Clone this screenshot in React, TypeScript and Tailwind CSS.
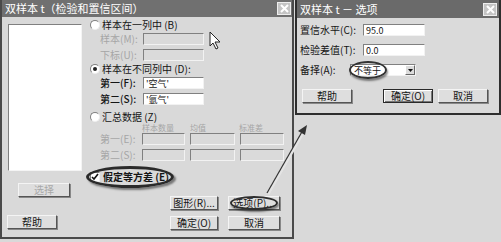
import React from 'react';

type BtnProps = {
  label: string;
  w: string;
  disabled?: boolean;
  isDefault?: boolean;
  circled?: boolean;
  className?: string;
};

function Btn({ label, w, disabled, isDefault, circled, className = '' }: BtnProps) {
  return (
    <div
      className={`relative h-[14px] ${w} flex items-center justify-center bg-[#dedede] text-[10px] leading-none border ${
        isDefault
          ? 'border-[#2a2a2a] shadow-[inset_1px_1px_0_#fff,inset_-1px_-1px_0_#777]'
          : 'border-t-[#f4f4f4] border-l-[#f4f4f4] border-b-[#555] border-r-[#555] shadow-[1px_1px_0_#888]'
      } ${disabled ? 'text-[#a8a8a8]' : 'text-[#151515]'} ${className}`}
    >
      {label}
      {circled && (
        <div className="absolute left-[1px] right-[1px] -top-[1px] -bottom-[1px] rounded-[50%] border-2 border-[#2e2e2e] shadow-[1px_2px_2px_rgba(0,0,0,0.45)]" />
      )}
    </div>
  );
}

function Field({ w, value, disabled }: { w: string; value?: string; disabled?: boolean }) {
  return (
    <div
      className={`h-[12px] ${w} border border-t-[#808080] border-l-[#808080] border-b-[#f2f2f2] border-r-[#f2f2f2] flex items-center px-[2px] text-[9px] leading-none text-[#151515] ${
        disabled ? 'bg-[#dadada]' : 'bg-white'
      }`}
    >
      {value}
    </div>
  );
}

function Radio({ checked }: { checked?: boolean }) {
  return (
    <div className="w-[10px] h-[10px] rounded-full bg-white border border-t-[#808080] border-l-[#808080] border-b-[#eee] border-r-[#eee] flex items-center justify-center mr-[2px]">
      {checked && <div className="w-[4px] h-[4px] rounded-full bg-[#222]" />}
    </div>
  );
}

function CloseBox() {
  return (
    <div className="w-[14px] h-[13px] bg-[#c4c4c4] border border-[#eee] flex items-center justify-center">
      <svg width="9" height="9" viewBox="0 0 9 9">
        <path d="M1 1 L8 8 M8 1 L1 8" stroke="#fff" strokeWidth="2" />
      </svg>
    </div>
  );
}

export default function App() {
  return (
    <div className="relative w-[501px] h-[242px] overflow-hidden bg-[#d9d9d9] flex font-['Noto_Sans_CJK_SC','Noto_Sans',sans-serif] text-[#151515]">
      {/* main dialog */}
      <div className="w-[294px] h-[239px] border-x-2 border-b-2 border-[#4a4a4a] bg-[#d9d9d9] flex flex-col">
        <div className="h-[17px] bg-[#707070] flex items-center justify-between pl-[3px] pr-[1px]">
          <span className="text-white text-[11px] leading-none">双样本 t（检验和置信区间）</span>
          <CloseBox />
        </div>

        <div className="flex flex-1">
          {/* left column */}
          <div className="w-[88px] flex flex-col">
            <div className="ml-[6px] mt-[7px] w-[74px] h-[147px] bg-white border border-t-[#808080] border-l-[#808080] border-b-[#f4f4f4] border-r-[#f4f4f4]" />
            <Btn label="选择" w="w-[52px]" disabled className="ml-[16px] mt-[12px]" />
            <Btn label="帮助" w="w-[50px]" className="ml-[5px] mt-[18px]" />
          </div>

          {/* right column */}
          <div className="flex-1 flex flex-col text-[10px] leading-none">
            <div className="mt-[2px] h-[12px] flex items-center">
              <Radio />
              <span>样本在一列中 (B)</span>
            </div>
            <div className="mt-[2px] h-[12px] flex items-center">
              <span className="w-[53px] pl-[10px] text-[#a6a6a6]">样本(M):</span>
              <Field w="w-[61px]" disabled />
            </div>
            <div className="mt-[4px] h-[12px] flex items-center">
              <span className="w-[53px] pl-[10px] text-[#a6a6a6]">下标(U):</span>
              <Field w="w-[61px]" disabled />
            </div>
            <div className="mt-[2px] h-[12px] flex items-center">
              <Radio checked />
              <span>样本在不同列中 (D):</span>
            </div>
            <div className="mt-[2px] h-[12px] flex items-center">
              <span className="w-[53px] pl-[10px] font-medium">第一(F):</span>
              <Field w="w-[61px]" value="'空气'" />
            </div>
            <div className="mt-[4px] h-[12px] flex items-center">
              <span className="w-[53px] pl-[10px] font-medium">第二(S):</span>
              <Field w="w-[61px]" value="'氩气'" />
            </div>
            <div className="mt-[6px] h-[12px] flex items-center">
              <Radio />
              <span>汇总数据 (Z)</span>
            </div>
            <div className="h-[9px] flex items-end text-[8px] text-[#a6a6a6]">
              <span className="w-[52px]" />
              <span className="w-[48px]">样本数量</span>
              <span className="w-[49px]">均值</span>
              <span>标准差</span>
            </div>
            <div className="mt-[1px] h-[12px] flex items-center gap-[5px]">
              <span className="w-[47px] pl-[10px] text-[#a6a6a6]">第一(E):</span>
              <Field w="w-[43px]" disabled />
              <Field w="w-[45px]" disabled />
              <Field w="w-[44px]" disabled />
            </div>
            <div className="mt-[4px] h-[12px] flex items-center gap-[5px]">
              <span className="w-[47px] pl-[10px] text-[#a6a6a6]">第二(S):</span>
              <Field w="w-[43px]" disabled />
              <Field w="w-[45px]" disabled />
              <Field w="w-[44px]" disabled />
            </div>
            <div className="mt-[10px] h-[12px] flex">
              <div className="relative flex items-center pr-[3px]">
                <div className="w-[10px] h-[10px] bg-white border border-t-[#808080] border-l-[#808080] border-b-[#eee] border-r-[#eee] flex items-center justify-center mr-[3px]">
                  <svg width="8" height="8" viewBox="0 0 8 8">
                    <path d="M1 4 L3 6 L7 1" stroke="#111" strokeWidth="1.6" fill="none" />
                  </svg>
                </div>
                <span className="font-semibold">假定等方差 (E)</span>
                <div className="absolute -left-[4px] -right-[2px] -top-[5px] -bottom-[5px] rounded-[50%] border-[3px] border-[#2a2a2a] shadow-[2px_2px_2px_rgba(0,0,0,0.45)]" />
              </div>
            </div>
            <div className="mt-[13px] flex gap-[10px] ml-[80px]">
              <Btn label="图形(R)..." w="w-[48px]" />
              <Btn label="选项(P)..." w="w-[52px]" circled />
            </div>
            <div className="mt-[6px] flex gap-[10px] ml-[80px]">
              <Btn label="确定(O)" w="w-[48px]" />
              <Btn label="取消" w="w-[52px]" />
            </div>
          </div>
        </div>
      </div>

      {/* options dialog */}
      <div className="flex-1 flex flex-col">
        <div className="h-[115px] ml-[1px] border-x-2 border-b-2 border-[#2e2e2e] bg-[#dadada] flex flex-col text-[10px] leading-none">
          <div className="h-[18px] bg-[#6a6a6a] flex items-center justify-between pl-[3px] pr-[2px]">
            <span className="text-white text-[11px] leading-none">双样本 t － 选项</span>
            <CloseBox />
          </div>
          <div className="mt-[6px] h-[12px] flex items-center pl-[3px]">
            <span className="w-[63px]">置信水平(C):</span>
            <Field w="w-[62px]" value="95.0" />
          </div>
          <div className="mt-[8px] h-[12px] flex items-center pl-[3px]">
            <span className="w-[63px]">检验差值(T):</span>
            <Field w="w-[62px]" value="0.0" />
          </div>
          <div className="mt-[8px] h-[12px] flex items-center pl-[3px]">
            <span className="w-[50px]">备择(A):</span>
            <div className="relative w-[66px] h-[12px] bg-white border border-t-[#808080] border-l-[#808080] border-b-[#f2f2f2] border-r-[#f2f2f2] flex items-center">
              <span className="flex-1 pl-[3px] text-[9px]">不等于</span>
              <div className="w-[10px] h-[10px] bg-[#dcdcdc] border border-t-[#fff] border-l-[#fff] border-b-[#666] border-r-[#666] flex items-center justify-center">
                <svg width="5" height="3" viewBox="0 0 5 3">
                  <path d="M0 0 L5 0 L2.5 3 Z" fill="#111" />
                </svg>
              </div>
              <div className="absolute -left-[2px] w-[38px] -top-[4px] -bottom-[4px] rounded-[50%] border-2 border-[#333] shadow-[1px_2px_2px_rgba(0,0,0,0.45)]" />
            </div>
          </div>
          <div className="mt-[13px] flex items-center pl-[5px]">
            <Btn label="帮助" w="w-[50px]" />
            <Btn label="确定(O)" w="w-[50px]" isDefault className="ml-[31px]" />
            <Btn label="取消" w="w-[50px]" className="ml-[5px]" />
          </div>
        </div>
      </div>

      {/* annotation arrow and cursor */}
      <svg className="absolute inset-0 pointer-events-none" width="501" height="242" viewBox="0 0 501 242">
        <line x1="268" y1="194" x2="304" y2="131" stroke="#e4e4e4" strokeWidth="3" />
        <line x1="267" y1="193" x2="303" y2="130" stroke="#333" strokeWidth="1.2" />
        <path d="M307 125 L298 131 L305 135 Z" fill="#333" />
        <path d="M210 32 L210 46 L213 43 L216 49 L218 48 L215 42 L220 42 Z" fill="#fff" stroke="#222" strokeWidth="1" />
      </svg>
    </div>
  );
}
